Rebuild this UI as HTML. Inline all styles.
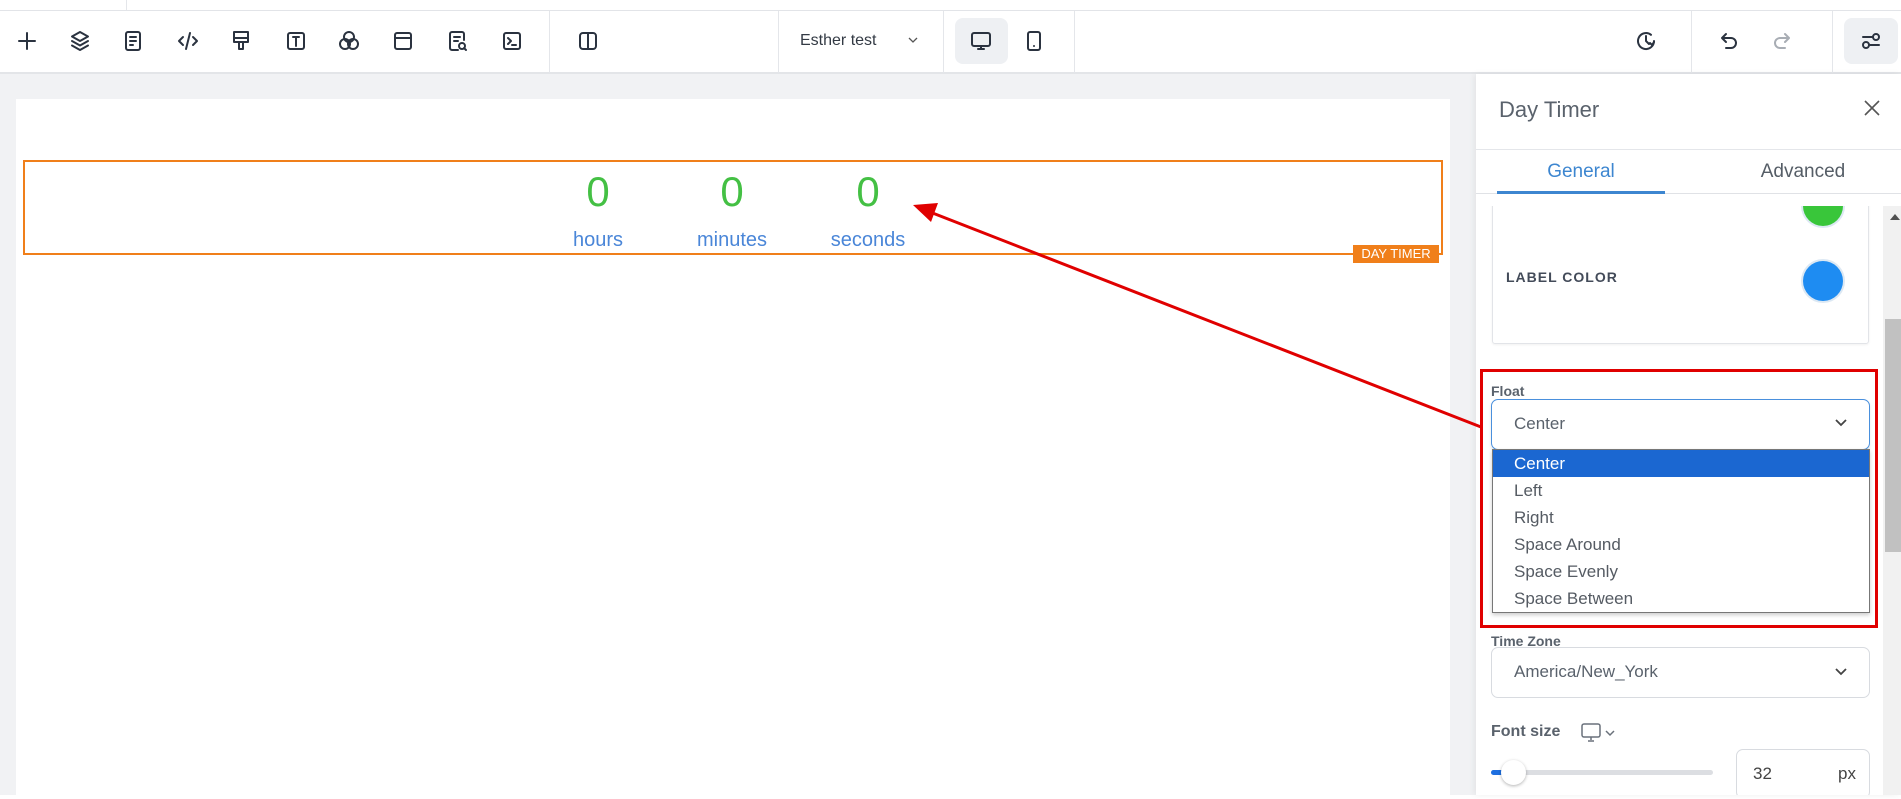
<!DOCTYPE html>
<html><head><meta charset="utf-8"><style>
*{margin:0;padding:0;box-sizing:border-box}
body{width:1901px;height:795px;overflow:hidden;background:#fff;font-family:"Liberation Sans",sans-serif;position:relative}
.abs{position:absolute}
.ic{position:absolute;top:29px;width:24px;height:24px}
.ic svg{width:24px;height:24px;fill:none;stroke:#2b3340;stroke-width:2;stroke-linecap:round;stroke-linejoin:round}
.sep{position:absolute;top:11px;height:62px;width:1px;background:#e4e6ea}
.item{position:absolute;left:1514px;font-size:17px;color:#555b63;height:27px;line-height:27px}
</style></head><body>
<div class="abs" style="left:0;top:10px;width:1901px;height:1px;background:#e2e4e8"></div>
<div class="abs" style="left:126px;top:0;width:1px;height:10px;background:#e4e6ea"></div>
<div class="abs" style="left:0;top:72px;width:1901px;height:2px;background:#e3e5e8"></div>
<div class="ic" style="left:15px"><svg viewBox="0 0 24 24"><path d="M12 4v16M4 12h16"/></svg></div>
<div class="ic" style="left:68px"><svg viewBox="0 0 24 24"><path d="M12 3l8 4.5-8 4.5-8-4.5z"/><path d="M4 12l8 4.5 8-4.5"/><path d="M4 16.5l8 4.5 8-4.5"/></svg></div>
<div class="ic" style="left:121px"><svg viewBox="0 0 24 24"><rect x="5" y="3" width="14" height="18" rx="2"/><path d="M9 8h6M9 12h6M9 16h3"/></svg></div>
<div class="ic" style="left:176px"><svg viewBox="0 0 24 24"><path d="M7 8l-4 4 4 4M17 8l4 4-4 4M14 4l-4 16"/></svg></div>
<div class="ic" style="left:229px"><svg viewBox="0 0 24 24"><path d="M5 3h14v10H5zM5 9h14M10 13v7h4v-7"/></svg></div>
<div class="ic" style="left:284px"><svg viewBox="0 0 24 24"><rect x="4" y="4" width="16" height="16" rx="2"/><path d="M9 8h6M12 8v9"/></svg></div>
<div class="ic" style="left:337px"><svg viewBox="0 0 24 24"><circle cx="12" cy="8" r="5"/><circle cx="8" cy="15" r="5"/><circle cx="16" cy="15" r="5"/></svg></div>
<div class="ic" style="left:391px"><svg viewBox="0 0 24 24"><rect x="4" y="4" width="16" height="16" rx="2"/><path d="M4 9h16"/></svg></div>
<div class="ic" style="left:446px"><svg viewBox="0 0 24 24"><path d="M12 21H6a2 2 0 0 1-2-2V5a2 2 0 0 1 2-2h10a2 2 0 0 1 2 2v6M8 8h6M8 12h4"/><circle cx="16" cy="17" r="3"/><path d="M18 19l2 2"/></svg></div>
<div class="ic" style="left:500px"><svg viewBox="0 0 24 24"><rect x="4" y="4" width="16" height="16" rx="2"/><path d="M8 9l3 3-3 3M12 16h4"/></svg></div>
<div class="sep" style="left:549px"></div>
<div class="ic" style="left:576px"><svg viewBox="0 0 24 24"><rect x="4" y="4" width="16" height="16" rx="3"/><path d="M12 4v16"/></svg></div>
<div class="sep" style="left:778px"></div>
<div class="abs" style="left:800px;top:32px;font-size:16px;color:#333a44">Esther test</div>
<div class="abs" style="left:905px;top:32px;width:16px;height:16px"><svg width="16" height="16" viewBox="0 0 16 16" fill="none" stroke="#555" stroke-width="1.3"><path d="M4 6l4 4 4-4"/></svg></div>
<div class="sep" style="left:943px"></div>
<div class="abs" style="left:955px;top:18px;width:53px;height:46px;background:#eef0f3;border-radius:8px"></div>
<div class="ic" style="left:969px"><svg viewBox="0 0 24 24"><rect x="3" y="4" width="18" height="13" rx="2"/><path d="M12 17v3M9 20h6"/></svg></div>
<div class="ic" style="left:1022px"><svg viewBox="0 0 24 24"><rect x="6" y="3" width="12" height="18" rx="2"/><path d="M12 17h.01"/></svg></div>
<div class="sep" style="left:1074px"></div>
<div class="ic" style="left:1634px"><svg viewBox="0 0 24 24"><path d="M20 12a8 8 0 1 1-3-6.2"/><path d="M12 7v5l3 3M20 13l-2 3-2-2"/></svg></div>
<div class="sep" style="left:1691px"></div>
<div class="ic" style="left:1717px"><svg viewBox="0 0 24 24"><path d="M9 5L5 9l4 4M5 9h9a5 5 0 0 1 0 10H9"/></svg></div>
<div class="ic" style="left:1770px"><svg viewBox="0 0 24 24" style="stroke:#a8adb4"><path d="M15 5l4 4-4 4M19 9h-9a5 5 0 0 0 0 10h5"/></svg></div>
<div class="sep" style="left:1832px"></div>
<div class="abs" style="left:1844px;top:18px;width:54px;height:46px;background:#eef0f3;border-radius:8px"></div>
<div class="ic" style="left:1859px"><svg viewBox="0 0 24 24"><path d="M4 8h10M10 16h10"/><circle cx="17" cy="8" r="3"/><circle cx="7" cy="16" r="3"/></svg></div>
<div class="abs" style="left:0;top:74px;width:1476px;height:721px;background:#f1f2f4"></div>
<div class="abs" style="left:16px;top:99px;width:1434px;height:700px;background:#fff"></div>
<div class="abs" style="left:23px;top:160px;width:1420px;height:95px;border:2px solid #f07f1a"></div>
<div class="abs" style="left:1353px;top:245px;width:86px;height:18px;background:#f07f1a;color:#fff;font-size:13px;line-height:18px;text-align:center">DAY TIMER</div>
<div class="abs" style="left:548px;top:168px;width:100px;text-align:center;color:#44c044;font-size:42px">0</div>
<div class="abs" style="left:682px;top:168px;width:100px;text-align:center;color:#44c044;font-size:42px">0</div>
<div class="abs" style="left:818px;top:168px;width:100px;text-align:center;color:#44c044;font-size:42px">0</div>
<div class="abs" style="left:548px;top:229px;width:100px;text-align:center;color:#4a86d8;font-size:20px">hours</div>
<div class="abs" style="left:682px;top:229px;width:100px;text-align:center;color:#4a86d8;font-size:20px">minutes</div>
<div class="abs" style="left:818px;top:229px;width:100px;text-align:center;color:#4a86d8;font-size:20px">seconds</div>
<div class="abs" style="left:1476px;top:74px;width:425px;height:721px;background:#fff;box-shadow:-2px 0 6px rgba(0,0,0,.06)"></div>
<div class="abs" style="left:1499px;top:97px;font-size:22px;color:#5a626c">Day Timer</div>
<div class="abs" style="left:1861px;top:97px"><svg width="22" height="22" viewBox="0 0 22 22" stroke="#555" stroke-width="1.6"><path d="M4 4l14 14M18 4L4 18"/></svg></div>
<div class="abs" style="left:1476px;top:149px;width:425px;height:1px;background:#e4e6ea"></div>
<div class="abs" style="left:1497px;top:161px;width:168px;text-align:center;font-size:19px;color:#3d86d0">General</div>
<div class="abs" style="left:1720px;top:161px;width:166px;text-align:center;font-size:19px;color:#555d66">Advanced</div>
<div class="abs" style="left:1476px;top:193px;width:425px;height:1px;background:#e0e2e6"></div>
<div class="abs" style="left:1497px;top:191px;width:168px;height:3px;background:#3d86d0"></div>
<div class="abs" style="left:1476px;top:206px;width:407px;height:589px;overflow:hidden">
  <div class="abs" style="left:16px;top:-20px;width:377px;height:158px;border:1px solid #e2e4e8;border-radius:3px;box-shadow:0 1px 2px rgba(0,0,0,.06)"></div>
  <div class="abs" style="left:327px;top:-20px;width:40px;height:40px;border-radius:50%;background:#39c63a;box-shadow:0 0 0 2px #dce8f3"></div>
  <div class="abs" style="left:30px;top:63px;font-size:14px;font-weight:bold;color:#434b59;letter-spacing:1px">LABEL COLOR</div>
  <div class="abs" style="left:327px;top:55px;width:40px;height:40px;border-radius:50%;background:#1e8cf2;box-shadow:0 0 0 2px #dce8f3"></div>
  <div class="abs" style="left:15px;top:177px;font-size:14px;font-weight:bold;color:#5a626c">Float</div>
  <div class="abs" style="left:15px;top:193px;width:379px;height:51px;border:1.5px solid #4a90dd;border-radius:7px;box-shadow:0 2px 3px rgba(0,0,0,.1)"></div>
  <div class="abs" style="left:38px;top:208px;font-size:17px;color:#5a626c">Center</div>
  <div class="abs" style="left:15px;top:427px;font-size:14px;font-weight:bold;color:#5a626c">Time Zone</div>
  <div class="abs" style="left:15px;top:441px;width:379px;height:51px;border:1px solid #d8dbe0;border-radius:7px"></div>
  <div class="abs" style="left:38px;top:456px;font-size:17px;color:#5a626c">America/New_York</div>
  <div class="abs" style="left:15px;top:517px;font-size:16px;font-weight:bold;color:#5a626c">Font size</div>
  <div class="abs" style="left:105px;top:516px"><svg width="40" height="22" viewBox="0 0 40 22" fill="none" stroke="#6a717b" stroke-width="1.5"><rect x="1" y="2" width="18" height="13" rx="2"/><path d="M10 15v3M7 19h6M25 9l4 4 4-4"/></svg></div>
  <div class="abs" style="left:15px;top:564px;width:222px;height:5px;border-radius:3px;background:#dcdee2"></div>
  <div class="abs" style="left:15px;top:564px;width:22px;height:5px;border-radius:3px;background:#1e6fe0"></div>
  <div class="abs" style="left:25px;top:554px;width:25px;height:25px;border-radius:50%;background:#fff;box-shadow:0 1px 3px rgba(0,0,0,.3)"></div>
  <div class="abs" style="left:260px;top:543px;width:134px;height:50px;border:1px solid #d8dbe0;border-radius:7px"></div>
  <div class="abs" style="left:277px;top:558px;font-size:17px;color:#444">32</div>
  <div class="abs" style="left:362px;top:558px;font-size:17px;color:#444">px</div>
</div>
<div class="abs" style="left:1832px;top:414px"><svg width="18" height="18" viewBox="0 0 18 18" fill="none" stroke="#444" stroke-width="1.8"><path d="M4 6l5 5 5-5"/></svg></div>
<div class="abs" style="left:1832px;top:663px"><svg width="18" height="18" viewBox="0 0 18 18" fill="none" stroke="#444" stroke-width="1.8"><path d="M4 6l5 5 5-5"/></svg></div>
<div class="abs" style="left:1492px;top:449px;width:378px;height:164px;background:#fff;border:1px solid #777;box-shadow:0 2px 4px rgba(0,0,0,.2)"></div>
<div class="abs" style="left:1493px;top:450px;width:376px;height:27px;background:#1b67d1"></div>
<div class="item" style="top:450px;color:#fff">Center</div>
<div class="item" style="top:477px">Left</div>
<div class="item" style="top:504px">Right</div>
<div class="item" style="top:531px">Space Around</div>
<div class="item" style="top:558px">Space Evenly</div>
<div class="item" style="top:585px">Space Between</div>
<div class="abs" style="left:1883px;top:206px;width:18px;height:589px;background:#f1f1f1"></div>
<div class="abs" style="left:1885px;top:319px;width:16px;height:233px;background:#c1c1c1"></div>
<div class="abs" style="left:1890px;top:214px;width:0;height:0;border-left:5px solid transparent;border-right:5px solid transparent;border-bottom:6px solid #505050"></div>
<div class="abs" style="left:1480px;top:369px;width:398px;height:259px;border:3px solid #e00000"></div>
<svg class="abs" style="left:0;top:0" width="1901" height="795"><line x1="1481" y1="427" x2="930" y2="212" stroke="#e00000" stroke-width="3"/><polygon points="913,205 938,203 931,222" fill="#e00000"/></svg>
</body></html>
